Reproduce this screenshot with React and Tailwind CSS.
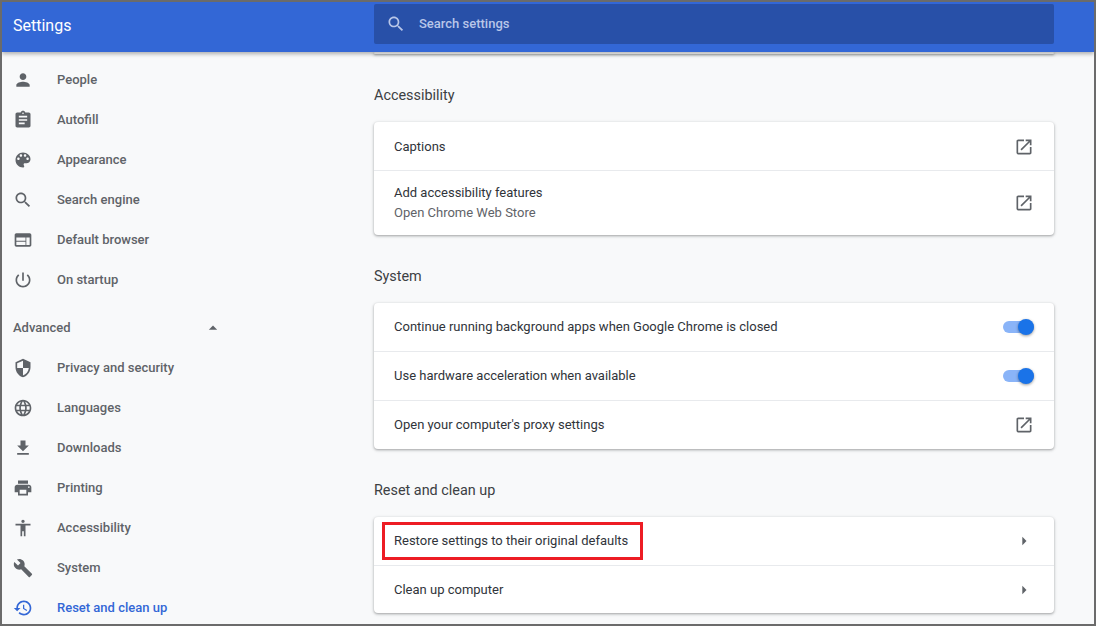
const paths = {
  person: 'M12 12c2.21 0 4-1.79 4-4s-1.79-4-4-4-4 1.79-4 4 1.79 4 4 4zm0 2c-2.67 0-8 1.34-8 4v2h16v-2c0-2.66-5.33-4-8-4z',
  assignment: 'M19 3h-4.18C14.4 1.84 13.3 1 12 1c-1.3 0-2.4.84-2.82 2H5c-1.1 0-2 .9-2 2v14c0 1.1.9 2 2 2h14c1.1 0 2-.9 2-2V5c0-1.1-.9-2-2-2zm-7 0c.55 0 1 .45 1 1s-.45 1-1 1-1-.45-1-1 .45-1 1-1zm2 14H7v-2h7v2zm3-4H7v-2h10v2zm0-4H7V7h10v2z',
  palette: 'M12 3c-4.97 0-9 4.03-9 9s4.03 9 9 9c.83 0 1.5-.67 1.5-1.5 0-.39-.15-.74-.39-1.01-.23-.26-.38-.61-.38-.99 0-.83.67-1.5 1.5-1.5H16c2.76 0 5-2.24 5-5 0-4.42-4.03-8-9-8zm-5.5 9c-.83 0-1.5-.67-1.5-1.5S5.67 9 6.5 9 8 9.67 8 10.5 7.33 12 6.5 12zm3-4C8.67 8 8 7.33 8 6.5S8.67 5 9.5 5s1.5.67 1.5 1.5S10.33 8 9.5 8zm5 0c-.83 0-1.5-.67-1.5-1.5S13.67 5 14.5 5s1.5.67 1.5 1.5S15.33 8 14.5 8zm3 4c-.83 0-1.5-.67-1.5-1.5S16.67 9 17.5 9s1.5.67 1.5 1.5-.67 1.5-1.5 1.5z',
  search: 'M15.5 14h-.79l-.28-.27C15.41 12.59 16 11.11 16 9.5 16 5.91 13.09 3 9.5 3S3 5.91 3 9.5 5.91 16 9.5 16c1.61 0 3.09-.59 4.23-1.57l.27.28v.79l5 4.99L20.49 19l-4.99-5zm-6 0C7.01 14 5 11.99 5 9.5S7.01 5 9.5 5 14 7.01 14 9.5 11.99 14 9.5 14z',
  web: 'M20 4H4c-1.1 0-1.99.9-1.99 2L2 18c0 1.1.9 2 2 2h16c1.1 0 2-.9 2-2V6c0-1.1-.9-2-2-2zm-5 14H4v-4h11v4zm0-5H4V9h11v4zm5 5h-4V9h4v9z',
  power: 'M13 3h-2v10h2V3zm4.83 2.17l-1.42 1.42C17.99 7.86 19 9.81 19 12c0 3.87-3.13 7-7 7s-7-3.13-7-7c0-2.19 1.01-4.14 2.58-5.42L6.17 5.17C4.23 6.82 3 9.26 3 12c0 4.97 4.03 9 9 9s9-4.03 9-9c0-2.74-1.23-5.18-3.17-6.83z',
  security: 'M12 1L3 5v6c0 5.55 3.84 10.74 9 12 5.16-1.26 9-6.45 9-12V5l-9-4zm0 10.99h7c-.53 4.12-3.28 7.79-7 8.94V12H5V6.3l7-3.11v8.8z',
  language: 'M11.99 2C6.47 2 2 6.48 2 12s4.47 10 9.99 10C17.52 22 22 17.52 22 12S17.52 2 11.99 2zm6.93 6h-2.95c-.32-1.25-.78-2.45-1.38-3.56 1.84.63 3.37 1.91 4.33 3.56zM12 4.04c.83 1.2 1.48 2.53 1.91 3.96h-3.82c.43-1.43 1.08-2.76 1.91-3.96zM4.26 14C4.1 13.36 4 12.69 4 12s.1-1.36.26-2h3.38c-.08.66-.14 1.32-.14 2 0 .68.06 1.34.14 2H4.26zm.82 2h2.95c.32 1.25.78 2.45 1.38 3.56-1.84-.63-3.37-1.9-4.33-3.56zm2.95-8H5.08c.96-1.66 2.49-2.93 4.33-3.56C8.81 5.55 8.35 6.75 8.03 8zM12 19.96c-.83-1.2-1.48-2.53-1.91-3.96h3.82c-.43 1.43-1.08 2.76-1.91 3.96zM14.34 14H9.66c-.09-.66-.16-1.32-.16-2 0-.68.07-1.35.16-2h4.68c.09.65.16 1.32.16 2 0 .68-.07 1.34-.16 2zm.25 5.56c.6-1.11 1.06-2.31 1.38-3.56h2.95c-.96 1.65-2.49 2.93-4.33 3.56zM16.36 14c.08-.66.14-1.32.14-2 0-.68-.06-1.34-.14-2h3.38c.16.64.26 1.31.26 2s-.1 1.36-.26 2h-3.38z',
  download: 'M19 9h-4V3H9v6H5l7 7 7-7zM5 18v2h14v-2H5z',
  print: 'M19 8H5c-1.66 0-3 1.34-3 3v6h4v4h12v-4h4v-6c0-1.66-1.34-3-3-3zm-3 11H8v-5h8v5zm3-7c-.55 0-1-.45-1-1s.45-1 1-1 1 .45 1 1-.45 1-1 1zm-1-9H6v4h12V3z',
  accessibility: 'M12 2c1.1 0 2 .9 2 2s-.9 2-2 2-2-.9-2-2 .9-2 2-2zm9 7h-6v13h-2v-6h-2v6H9V9H3V7h18v2z',
  build: 'M22.7 19l-9.1-9.1c.9-2.3.4-5-1.5-6.9-2-2-5-2.4-7.4-1.3L9 6 6 9 1.6 4.7C.4 7.1.9 10.1 2.9 12.1c1.9 1.9 4.6 2.4 6.9 1.5l9.1 9.1c.4.4 1 .4 1.4 0l2.3-2.3c.5-.4.5-1.1.1-1.4z',
  restore: 'M13 3c-4.97 0-9 4.03-9 9H1l3.89 3.89.07.14L9 12H6c0-3.87 3.13-7 7-7s7 3.13 7 7-3.13 7-7 7c-1.93 0-3.68-.79-4.94-2.06l-1.42 1.42C8.27 19.99 10.51 21 13 21c4.97 0 9-4.03 9-9s-4.03-9-9-9zm-1 5v5l4.28 2.54.72-1.21-3.5-2.08V8H12z',
  openInNew: 'M19 19H5V5h7V3H5c-1.11 0-2 .9-2 2v14c0 1.1.89 2 2 2h14c1.1 0 2-.9 2-2v-7h-2v7zM14 3v2h3.59l-9.83 9.83 1.41 1.41L19 6.41V10h2V3h-7z',
  arrowRight: 'M10 7l5 5-5 5z',
  arrowUp: 'M7 14l5-5 5 5z',
}

function Icon({ name, className }) {
  return (
    <svg viewBox="0 0 24 24" fill="currentColor" className={className}>
      <path d={paths[name]} />
    </svg>
  )
}

const basicItems = [
  ['person', 'People'],
  ['assignment', 'Autofill'],
  ['palette', 'Appearance'],
  ['search', 'Search engine'],
  ['web', 'Default browser'],
  ['power', 'On startup'],
]

const advancedItems = [
  ['security', 'Privacy and security'],
  ['language', 'Languages'],
  ['download', 'Downloads'],
  ['print', 'Printing'],
  ['accessibility', 'Accessibility'],
  ['build', 'System'],
]

function NavItem({ icon, label, active }) {
  return (
    <div className={`flex h-10 items-center gap-6 pl-[11px] text-[13px] font-medium ${active ? 'text-[#3367d6]' : 'text-[#5f6368]'}`}>
      <Icon name={icon} className="h-5 w-5 shrink-0" />
      <span>{label}</span>
    </div>
  )
}

function SectionTitle({ children }) {
  return <h2 className="mt-8 mb-4 h-5 text-[14.4px] leading-5 text-[#3c4043]">{children}</h2>
}

function Row({ height = 'h-12', border = true, children }) {
  return (
    <div className={`flex items-center justify-between pl-5 pr-5 text-[13px] text-[#30343a] ${height} ${border ? 'border-t border-[#e8eaed]' : ''}`}>
      {children}
    </div>
  )
}

function Toggle() {
  return (
    <div className="relative h-3 w-[31px] rounded-full bg-[#8ab4f8]">
      <div className="absolute -top-0.5 right-0 h-4 w-4 rounded-full bg-[#1a73e8] shadow-[0_1px_3px_rgba(0,0,0,0.4)]" />
    </div>
  )
}

const cardClass = 'rounded-[4px] bg-white shadow-[0_1px_2px_rgba(60,64,67,0.3),0_1px_3px_1px_rgba(60,64,67,0.15)]'

export default function App() {
  return (
    <div className="flex h-[626px] w-[1096px] flex-col overflow-hidden border-2 border-[#6b6b6b] bg-[#f8f9fa] font-['Roboto',sans-serif]">
      <header className="relative z-10 flex h-[50px] shrink-0 items-start bg-[#3367d6] shadow-[0_2px_4px_rgba(0,0,0,0.3)]">
        <div className="flex h-[47px] w-[372px] items-center pl-[11px] text-[16px] text-white">Settings</div>
        <div className="mt-0.5 flex h-10 w-[680px] items-center gap-[13px] rounded-[2px] bg-[#2850a8] pl-3 text-[13px] font-medium text-[#b8c6e8]">
          <Icon name="search" className="h-5 w-5 shrink-0" />
          <span>Search settings</span>
        </div>
      </header>

      <div className="flex min-h-0 flex-1">
        <nav className="w-[372px] shrink-0 pt-2">
          {basicItems.map(([icon, label]) => (
            <NavItem key={label} icon={icon} label={label} />
          ))}
          <div className="mt-2 flex h-10 items-center text-[13px] font-medium text-[#5f6368]">
            <span className="w-[201px] pl-[11px]">Advanced</span>
            <Icon name="arrowUp" className="h-5 w-5" />
          </div>
          {advancedItems.map(([icon, label]) => (
            <NavItem key={label} icon={icon} label={label} />
          ))}
          <NavItem icon="restore" label="Reset and clean up" active />
        </nav>

        <main className="w-[680px] shrink-0">
          <div className={`h-0.5 rounded-b-[4px] ${cardClass}`} />

          <SectionTitle>Accessibility</SectionTitle>
          <div className={cardClass}>
            <Row border={false} height="h-12 pt-px">
              <span>Captions</span>
              <Icon name="openInNew" className="h-5 w-5 text-[#5f6368]" />
            </Row>
            <Row height="h-[65px]">
              <div>
                <div className="leading-5">Add accessibility features</div>
                <div className="leading-5 text-[#5f6368]">Open Chrome Web Store</div>
              </div>
              <Icon name="openInNew" className="h-5 w-5 text-[#5f6368]" />
            </Row>
          </div>

          <SectionTitle>System</SectionTitle>
          <div className={cardClass}>
            <Row border={false}>
              <span>Continue running background apps when Google Chrome is closed</span>
              <Toggle />
            </Row>
            <Row height="h-[49px]">
              <span>Use hardware acceleration when available</span>
              <Toggle />
            </Row>
            <Row height="h-[49px]">
              <span>Open your computer's proxy settings</span>
              <Icon name="openInNew" className="h-5 w-5 text-[#5f6368]" />
            </Row>
          </div>

          <SectionTitle>Reset and clean up</SectionTitle>
          <div className={cardClass}>
            <div className="relative">
              <Row border={false}>
                <span>Restore settings to their original defaults</span>
                <Icon name="arrowRight" className="h-5 w-5 text-[#5f6368]" />
              </Row>
              <div className="absolute top-[5px] left-2 h-[38px] w-[261px] border-[3px] border-[#ed1c24]" />
            </div>
            <Row>
              <span>Clean up computer</span>
              <Icon name="arrowRight" className="h-5 w-5 text-[#5f6368]" />
            </Row>
          </div>
        </main>
      </div>
    </div>
  )
}
